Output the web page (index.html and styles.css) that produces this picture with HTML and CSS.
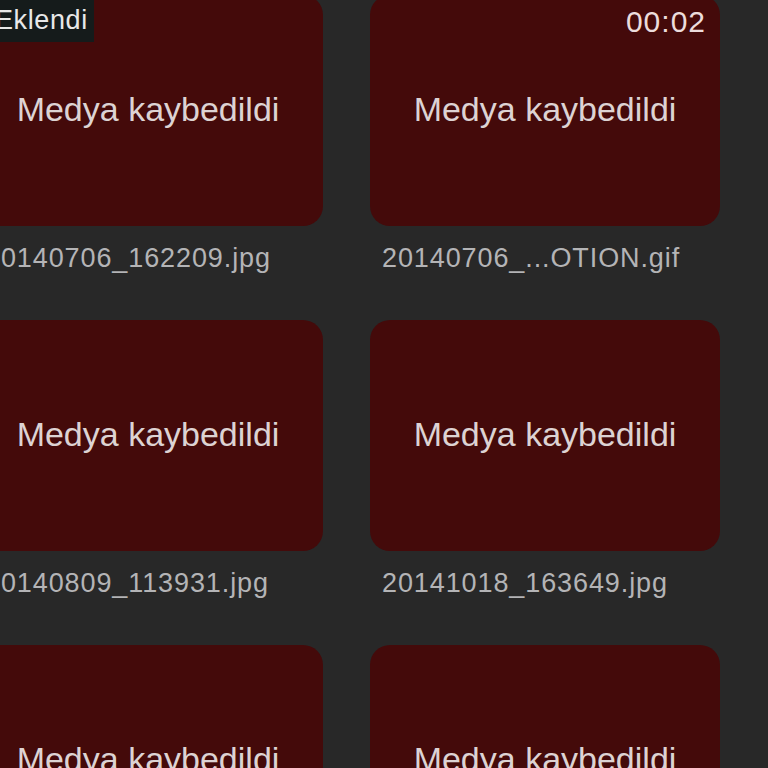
FILE: index.html
```html
<!DOCTYPE html>
<html lang="tr">
<head>
<meta charset="utf-8">
<title>Medya</title>
<link rel="stylesheet" href="styles.css">
</head>
<body>
<div class="grid">
  <div class="item">
    <div class="card">
      <span class="badge">Eklendi</span>
      <span class="msg">Medya kaybedildi</span>
    </div>
    <div class="name">20140706_162209.jpg</div>
  </div>
  <div class="item">
    <div class="card">
      <span class="dur">00:02</span>
      <span class="msg">Medya kaybedildi</span>
    </div>
    <div class="name">20140706_...OTION.gif</div>
  </div>
  <div class="item">
    <div class="card">
      <span class="msg">Medya kaybedildi</span>
    </div>
    <div class="name">20140809_113931.jpg</div>
  </div>
  <div class="item">
    <div class="card">
      <span class="msg">Medya kaybedildi</span>
    </div>
    <div class="name">20141018_163649.jpg</div>
  </div>
  <div class="item">
    <div class="card">
      <span class="msg">Medya kaybedildi</span>
    </div>
  </div>
  <div class="item">
    <div class="card">
      <span class="msg">Medya kaybedildi</span>
    </div>
  </div>
</div>
</body>
</html>
```

FILE: styles.css
```css
html, body {
  margin: 0;
  padding: 0;
  background: #282828;
  overflow: hidden;
  height: 768px;
}

body {
  font-family: "Liberation Sans", Arial, sans-serif;
}

.grid {
  display: grid;
  grid-template-columns: 350px 350px;
  grid-auto-rows: 325px;
  column-gap: 47px;
  margin-left: -27px;
  margin-top: -5px;
}

.item {
  display: flex;
  flex-direction: column;
}

.card {
  position: relative;
  height: 231px;
  background: #440a0a;
  border-radius: 20px;
  display: flex;
  align-items: center;
  justify-content: center;
}

.msg {
  font-size: 34px;
  color: #ddd3d3;
  line-height: 40px;
  padding-bottom: 4px;
}

.name {
  margin-top: 15px;
  padding-left: 12px;
  font-size: 27px;
  line-height: 34px;
  letter-spacing: 0.9px;
  color: #b4b4b6;
  white-space: nowrap;
}

.badge {
  position: absolute;
  top: 0;
  left: 18px;
  padding: 8px 6px 4px 4px;
  font-size: 27px;
  line-height: 35px;
  letter-spacing: 0.6px;
  color: #e8e8e8;
  background: #151b1b;
}

.dur {
  position: absolute;
  top: 9px;
  right: 14px;
  font-size: 30px;
  line-height: 36px;
  letter-spacing: 1px;
  color: #ecdcdc;
}
```
